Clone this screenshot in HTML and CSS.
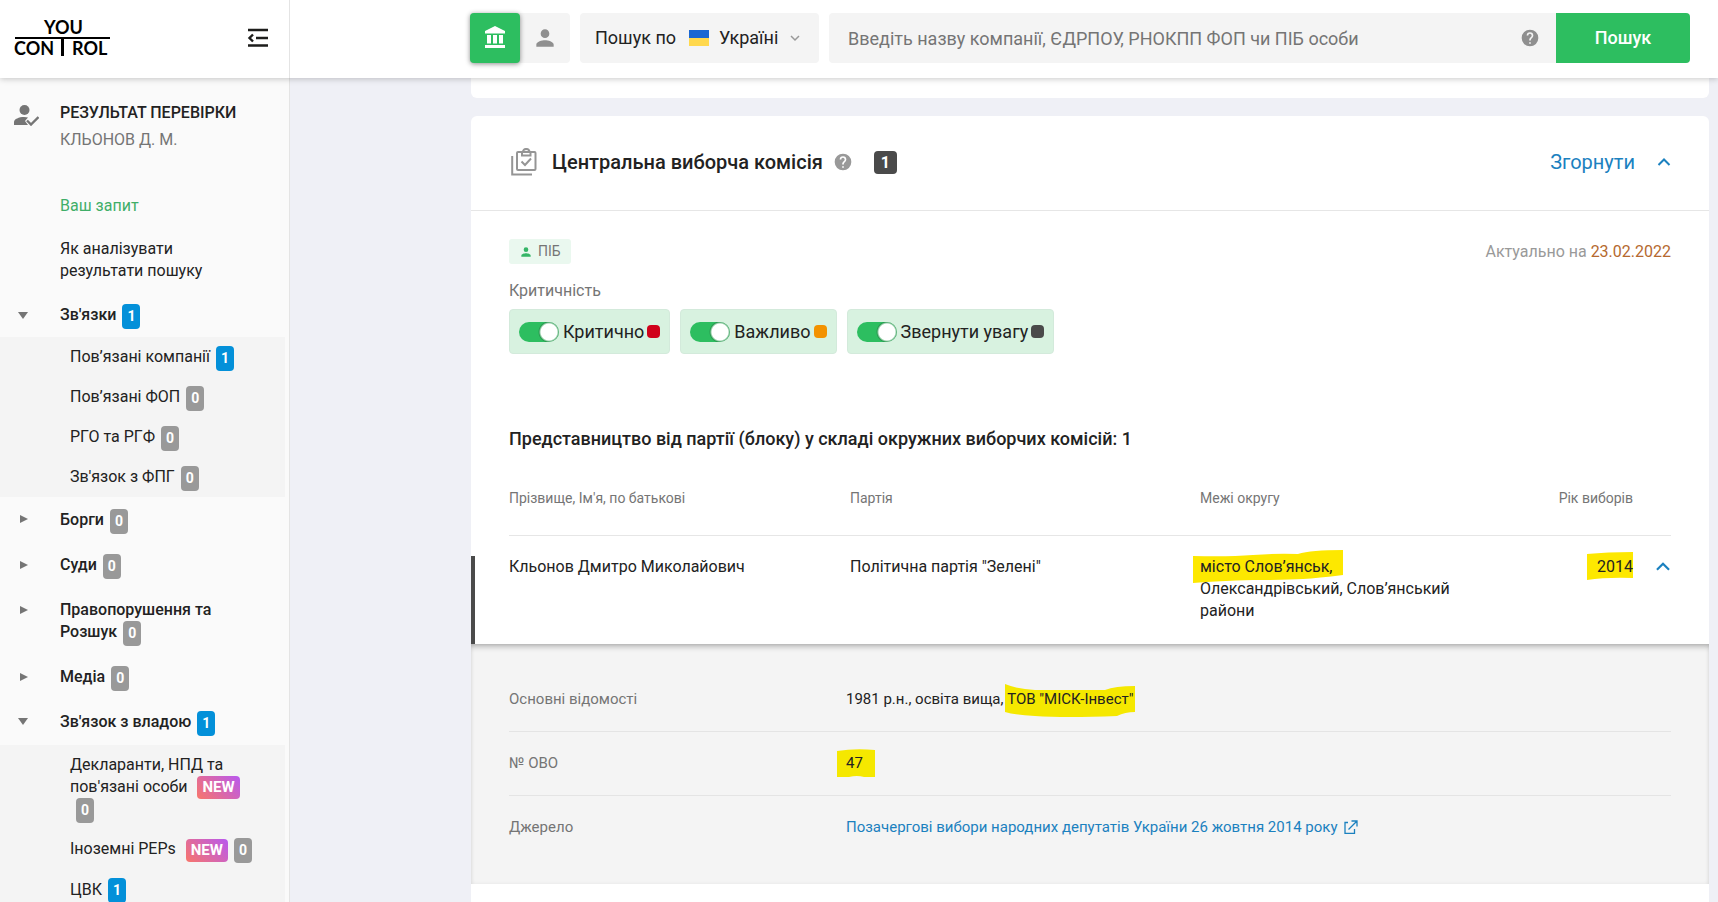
FILE: index.html
```
<!DOCTYPE html>
<html lang="uk">
<head>
<meta charset="utf-8">
<meta name="viewport" content="width=device-width, initial-scale=1">
<title>YouControl</title>
<link rel="stylesheet" href="styles.css">
</head>
<body>
<svg class="sprite" aria-hidden="true">
  <symbol id="person" viewBox="0 0 24 24"><path d="M12 12a4 4 0 1 0 0-8 4 4 0 0 0 0 8zm0 2c-2.700 0-8 1.300-8 4v2h16v-2c0-2.700-5.300-4-8-4z"/></symbol>
  <symbol id="help" viewBox="0 0 24 24"><path d="M12 2a10 10 0 1 0 0 20 10 10 0 0 0 0-20zm1 17h-2v-2h2zm2.070-7.750l-.9.920C13.450 12.900 13 13.500 13 15h-2v-.5c0-1.100.450-2.100 1.170-2.830l1.240-1.260A2 2 0 1 0 10 9H8a4 4 0 1 1 8 0c0 .880-.360 1.680-.930 2.250z"/></symbol>
  <symbol id="up" viewBox="0 0 14 10"><path d="M1.500 8L7 2.500 12.500 8" fill="none" stroke="currentColor" stroke-width="2"/></symbol>
</svg>

<header class="topbar">
  <div class="brand">
    <a href="#" aria-label="YouControl">
      <svg class="logo" width="96" height="36" viewBox="0 0 96 36">
        <text x="29" y="14">YOU</text>
        <path d="M0 17h95v2H49v17h-3V19H0z"/>
        <text x="-1" y="35">CON</text>
        <text x="57" y="35">ROL</text>
      </svg>
    </a>
    <button class="icon-btn" aria-label="Згорнути меню">
      <svg width="22" height="20" viewBox="0 0 22 20" fill="none" stroke="#1d1d1b" stroke-width="2.400"><path d="M1 2h20M9 10h12M1 17.500h20M6 6.500L2.500 10 6 13.500"/></svg>
    </button>
  </div>
  <form class="search">
    <div class="modes">
      <button type="button" class="mode mode-on" aria-label="Компанії">
        <svg width="22" height="24" viewBox="0 0 22 24" fill="#fff"><path d="M11 0l10 5v2.500H1V5zM3 9h4v8.500H3zM9 9h4v8.500H9zM15 9h4v8.500h-4zM1 19h20v3H1z"/></svg>
      </button>
      <button type="button" class="mode" aria-label="Фізичні особи"><svg width="26" height="26" fill="#8f8f8f"><use href="#person"/></svg></button>
    </div>
    <div class="region">
      <label for="country">Пошук по</label>
      <svg width="20" height="16" viewBox="0 0 20 16"><path fill="#1a67d2" d="M0 0h20v8H0z"/><path fill="#ffd84d" d="M0 8h20v8H0z"/></svg>
      <select id="country"><option>Україні</option></select>
      <svg class="chev" width="10" height="8" viewBox="0 0 10 8" fill="none" stroke="#999" stroke-width="1.500"><path d="M1 2l4 4 4-4"/></svg>
    </div>
    <div class="query">
      <input type="text" aria-label="Запит" placeholder="Введіть назву компанії, ЄДРПОУ, РНОКПП ФОП чи ПІБ особи">
      <svg width="20" height="20" fill="#8f8f8f"><use href="#help"/></svg>
    </div>
    <button type="submit" class="submit">Пошук</button>
  </form>
</header>

<div class="page">
  <nav class="side">
    <div class="side-head">
      <svg width="25" height="22" viewBox="0 0 25 22" fill="#757575"><circle cx="10.500" cy="6" r="5"/><path d="M0 21v-3c0-3 5-5 10-5 1.500 0 3 .2 4 .5L11 17l3 4z"/><path d="M13 16.500l4 4 7.500-7.500" fill="none" stroke="#757575" stroke-width="2.400"/></svg>
      <div>
        <div class="side-title">РЕЗУЛЬТАТ ПЕРЕВІРКИ</div>
        <div class="side-sub">КЛЬОНОВ Д. М.</div>
      </div>
    </div>
    <a class="plain current" href="#">Ваш запит</a>
    <a class="plain" href="#">Як аналізувати результати пошуку</a>

    <a class="group open" href="#">Зв'язки<span class="n blue">1</span></a>
    <div class="sub">
      <a href="#">Пов’язані компанії<span class="n blue">1</span></a>
      <a href="#">Пов’язані ФОП<span class="n">0</span></a>
      <a href="#">РГО та РГФ<span class="n">0</span></a>
      <a href="#">Зв'язок з ФПГ<span class="n">0</span></a>
    </div>
    <a class="group" href="#">Борги<span class="n">0</span></a>
    <a class="group" href="#">Суди<span class="n">0</span></a>
    <a class="group" href="#">Правопорушення та Розшук<span class="n">0</span></a>
    <a class="group" href="#">Медіа<span class="n">0</span></a>
    <a class="group open" href="#">Зв'язок з владою<span class="n blue">1</span></a>
    <div class="sub">
      <a href="#">Декларанти, НПД та пов'язані особи <span class="new">NEW</span><span class="n">0</span></a>
      <a href="#">Іноземні PEPs <span class="new">NEW</span><span class="n">0</span></a>
      <a href="#">ЦВК<span class="n blue">1</span></a>
    </div>
  </nav>

  <main class="content">
    <section class="card card-prev"></section>
    <section class="card">
      <div class="card-head">
        <svg width="26" height="28" viewBox="0 0 26 28" fill="none" stroke="#959595" stroke-width="2"><path d="M1.200 8v18.500H21"/><rect x="6" y="4" width="18.500" height="18" rx="1"/><path d="M11 4V7.500h8.500V4"/><path d="M12 4a3.200 3 0 0 1 6.500 0"/><path d="M10.500 13.500l3.500 3.500 6-6.500"/></svg>
        <h2>Центральна виборча комісія</h2>
        <svg class="hint" width="20" height="20" fill="#999"><use href="#help"/></svg>
        <span class="count">1</span>
        <button class="collapse">Згорнути <svg width="14" height="10"><use href="#up"/></svg></button>
      </div>
      <div class="body">
        <div class="meta">
          <span class="tag"><svg width="14" height="14" fill="#35b567"><use href="#person"/></svg>ПІБ</span>
          <span class="actual">Актуально на <time datetime="2022-02-23">23.02.2022</time></span>
        </div>
        <fieldset class="levels">
          <legend>Критичність</legend>
          <div class="level-list">
            <label><input type="checkbox" checked>Критично<i class="dot red"></i></label>
            <label><input type="checkbox" checked>Важливо<i class="dot orange"></i></label>
            <label><input type="checkbox" checked>Звернути увагу<i class="dot dark"></i></label>
          </div>
        </fieldset>
        <h3>Представництво від партії (блоку) у складі окружних виборчих комісій: 1</h3>
        <table>
          <thead><tr><th class="c1">Прізвище, Ім'я, по батькові</th><th class="c2">Партія</th><th class="c3">Межі округу</th><th class="year">Рік виборів</th><th class="c5"></th></tr></thead>
          <tbody><tr>
            <td>Кльонов Дмитро Миколайович</td>
            <td>Політична партія "Зелені"</td>
            <td><mark class="m-city"><svg viewBox="0 0 150 33" preserveAspectRatio="none"><path d="M0 6Q35 7 60 5T105 4Q118 0 150 0V25Q125 28 110 29T60 30Q25 31 0 33z"/></svg>місто Слов’янськ,</mark> Олександрівський, Слов’янський райони</td>
            <td class="year"><mark class="m-year"><svg viewBox="0 0 46 28" preserveAspectRatio="none"><path d="M0 2Q20 0 46 0V26Q20 25 0 28z"/></svg>2014</mark></td>
            <td class="year"><button class="row-toggle" aria-label="Згорнути рядок"><svg width="16" height="11"><use href="#up"/></svg></button></td>
          </tr></tbody>
        </table>
      </div>
      <dl class="details">
        <div><dt>Основні відомості</dt><dd>1981 р.н., освіта вища, <mark class="m-firm"><svg viewBox="0 0 130 33" preserveAspectRatio="none"><path d="M0 0Q12 5 30 6H100Q110 2 130 2V28Q120 28 112 32 60 34 30 32 10 31 0 28z"/></svg>ТОВ "МІСК-Інвест"</mark></dd></div>
        <div><dt>№ ОВО</dt><dd><mark class="m-num"><svg viewBox="0 0 38 28" preserveAspectRatio="none"><path d="M0 2Q18-1 38 1V28H27Q20 26 12 28H0z"/></svg>47</mark></dd></div>
        <div><dt>Джерело</dt><dd><a href="#">Позачергові вибори народних депутатів України 26 жовтня 2014 року <svg width="14" height="14" viewBox="0 0 14 14" fill="none" stroke="currentColor" stroke-width="1.300"><path d="M4 2.500H1v10.800h9.500V9M7.500 1h5.500v5.500M13 1L4.500 9.500"/></svg></a></dd></div>
      </dl>
    </section>
  </main>
</div>
</body>
</html>
```
FILE: styles.css
```
* { box-sizing: border-box; }
body {
  margin: 0;
  height: 100vh;
  overflow: hidden;
  display: flex;
  flex-direction: column;
  font: 16px/22px Roboto, "Noto Sans", sans-serif;
  color: #222;
  background: #eff0f6;
}
a { color: inherit; text-decoration: none; }
button, input, select { font: inherit; color: inherit; border: 0; background: none; padding: 0; margin: 0; }
button { cursor: pointer; }
svg { flex: none; }
.sprite { position: absolute; width: 0; height: 0; }

.topbar {
  display: flex;
  flex: none;
  height: 78px;
  background: #fff;
  box-shadow: 0 1px 6px rgba(0, 0, 0, .22);
  position: relative;
  z-index: 2;
}
.brand {
  flex: none;
  width: 290px;
  border-right: 1px solid #e4e4e4;
  display: flex;
  align-items: center;
  justify-content: space-between;
  padding: 0 20px 2px 15px;
}
.logo { display: block; overflow: visible; font: bold 18px Lato, sans-serif; }
.icon-btn svg { display: block; }
.search {
  flex: 1;
  display: flex;
  align-items: center;
  font-size: 18px;
  padding: 0 28px 2px 180px;
}
.modes { display: flex; background: #f4f4f4; border-radius: 4px; margin-right: 10px; }
.mode { width: 50px; height: 50px; border-radius: 4px; display: grid; place-items: center; }
.mode-on { background: #2dbe60; box-shadow: 0 1px 5px rgba(0, 0, 0, .45); }
.region {
  flex: none;
  height: 50px;
  display: flex;
  align-items: center;
  background: #f4f4f4;
  border-radius: 4px;
  padding: 0 19px 0 15px;
  margin-right: 10px;
}
.region label { margin-right: 13px; }
.region select { appearance: none; margin: 0 11px 0 10px; }
.query {
  flex: 1;
  height: 50px;
  display: flex;
  align-items: center;
  background: #f4f4f4;
  border-radius: 4px 0 0 4px;
  padding: 0 16px 0 19px;
}
.query input { flex: 1; min-width: 0; height: 50px; outline: 0; }
.query input::placeholder { color: #757575; opacity: 1; }
.submit { width: 134px; height: 50px; background: #2dbe60; color: #fff; font-weight: 500; border-radius: 0 4px 4px 0; }

.page { flex: 1; display: flex; min-height: 0; }
.side {
  flex: none;
  width: 290px;
  background: #fafafa;
  border-right: 1px solid #e4e4e4;
  overflow: hidden;
  padding: 24px 4px 0 0;
}
.side-head { display: flex; gap: 21px; padding-left: 14px; margin-bottom: 44px; }
.side-head svg { margin-top: 2px; }
.side-title { font-weight: 500; margin-bottom: 5px; }
.side-sub { color: #757575; }
.plain { display: block; padding: 0 60px; margin-bottom: 21px; }
.current { color: #3fae68; }
.group {
  display: block;
  position: relative;
  font-weight: 500;
  padding: 11px 60px 12px;
}
.plain + .group { padding: 1px 60px 11px; }
.sub + .group { padding-top: 12px; }
.group::before {
  content: "";
  position: absolute;
  left: 20px;
  top: 18px;
  border: solid transparent;
  border-width: 4px 0 4px 8px;
  border-left-color: #757575;
}
.group.open::before {
  left: 18px;
  border-width: 7px 5px 0;
  border-color: #757575 transparent transparent;
}
.plain + .group.open::before { top: 9px; }
.sub { background: #f4f4f4; }
.sub a { display: block; padding: 9px 28px 9px 70px; }
.n {
  display: inline-block;
  min-width: 18px;
  height: 25px;
  margin: -2px 0 -3px 6px;
  vertical-align: middle;
  border-radius: 4px;
  background: #999;
  color: #fff;
  font-weight: 700;
  font-size: 14px;
  line-height: 25px;
  text-align: center;
}
.blue { background: #0390d9; }
.new {
  display: inline-block;
  height: 23px;
  margin: -1px 0 -1px 6px;
  padding: 0 5px;
  vertical-align: middle;
  border-radius: 4px;
  background: linear-gradient(45deg, #f8766a, #b858f0);
  color: #fff;
  font-weight: 700;
  font-size: 15px;
  line-height: 23px;
}

.content { flex: 1; padding: 0 9px 0 181px; overflow: hidden; }
.card { background: #fff; border-radius: 6px; min-height: 800px; }
.card-prev { min-height: 0; height: 20px; margin-bottom: 18px; border-radius: 0 0 6px 6px; }
.card-head {
  display: flex;
  align-items: center;
  height: 95px;
  padding: 0 38px 2px 40px;
  border-bottom: 1px solid #e6e6e6;
}
.card-head h2 { font-size: 20px; line-height: 28px; font-weight: 500; margin: 0 10px 0 15px; }
.count {
  width: 23px;
  height: 23px;
  margin-left: 21px;
  border-radius: 4px;
  background: #4a4a4a;
  color: #fff;
  font-weight: 700;
  line-height: 23px;
  text-align: center;
}
.collapse { margin-left: auto; display: flex; align-items: center; gap: 22px; font-size: 20px; color: #1b81bf; }
.body { padding: 28px 38px 0; position: relative; }
.body::before {
  content: "";
  position: absolute;
  left: 0;
  bottom: 0;
  width: 4px;
  height: 88px;
  background: #4a4a4a;
}
.meta { display: flex; justify-content: space-between; margin-bottom: 16px; line-height: 25px; }
.tag {
  display: flex;
  align-items: center;
  gap: 5px;
  height: 25px;
  padding: 0 10px;
  font-size: 14px;
  color: #757575;
  background: #eaf8ef;
  border-radius: 3px;
}
.actual { color: #999; }
.actual time { color: #b5692f; }
.levels { border: 0; margin: 0 0 74px; padding: 0; }
.levels legend { padding: 0; margin-bottom: 7px; color: #757575; }
.level-list { display: flex; gap: 10px; }
.level-list label {
  display: flex;
  align-items: center;
  height: 45px;
  padding: 0 9px;
  font-size: 18px;
  background: #d8f2e0;
  border: 1px solid #d3eadb;
  border-radius: 4px;
}
.level-list input {
  appearance: none;
  width: 40px;
  height: 20px;
  margin-right: 4px;
  border-radius: 10px;
  background: radial-gradient(circle at 30px 10px, #fff 8px, #2a9a50 10px, transparent 11px) #2dbe60;
}
.dot { width: 13px; height: 13px; border-radius: 4px; margin-left: 3px; }
.red { background: #d0021b; }
.orange { background: #f39200; }
.dark { background: #4a4a4a; }
h3 { margin: 0 0 37px; font-size: 18px; line-height: 22px; font-weight: 500; }
table { width: 100%; table-layout: fixed; border-collapse: collapse; text-align: left; }
th { font-size: 14px; font-weight: 400; color: #757575; padding: 0 0 26px; border-bottom: 1px solid #e6e6e6; }
td { vertical-align: top; padding: 20px 0 22px; }
.c1 { width: 341px; }
.c2 { width: 350px; }
.c3 { width: 265px; }
.c5 { width: 38px; }
.year { text-align: right; }
.row-toggle { color: #1b81bf; }

mark { position: relative; z-index: 0; background: none; color: inherit; white-space: nowrap; }
mark svg { position: absolute; z-index: -1; fill: #fde800; }
.m-city svg { left: -7px; top: -7px; width: 150px; height: 33px; }
.m-year svg { left: -10px; top: -5px; width: 46px; height: 28px; }
.details mark svg { fill: #f5e800; }
.m-firm svg { left: -2px; top: -6px; width: 130px; height: 33px; }
.m-num svg { left: -9px; top: -5px; width: 38px; height: 28px; }

.details {
  margin: 0;
  padding: 24px 38px 25px;
  font-size: 15px;
  background: #f4f4f4;
  box-shadow: inset 0 5px 6px -3px rgba(0, 0, 0, .3), inset 0 0 4px rgba(0, 0, 0, .06);
}
.details div { display: flex; padding: 20px 0 21px; border-bottom: 1px solid #e4e4e4; }
.details div:last-child { border: 0; }
.details dt { width: 337px; flex: none; color: #757575; }
.details dd { margin: 0; }
.details a { color: #1b81bf; }
.details a svg { margin-left: 3px; vertical-align: -2px; }
```
